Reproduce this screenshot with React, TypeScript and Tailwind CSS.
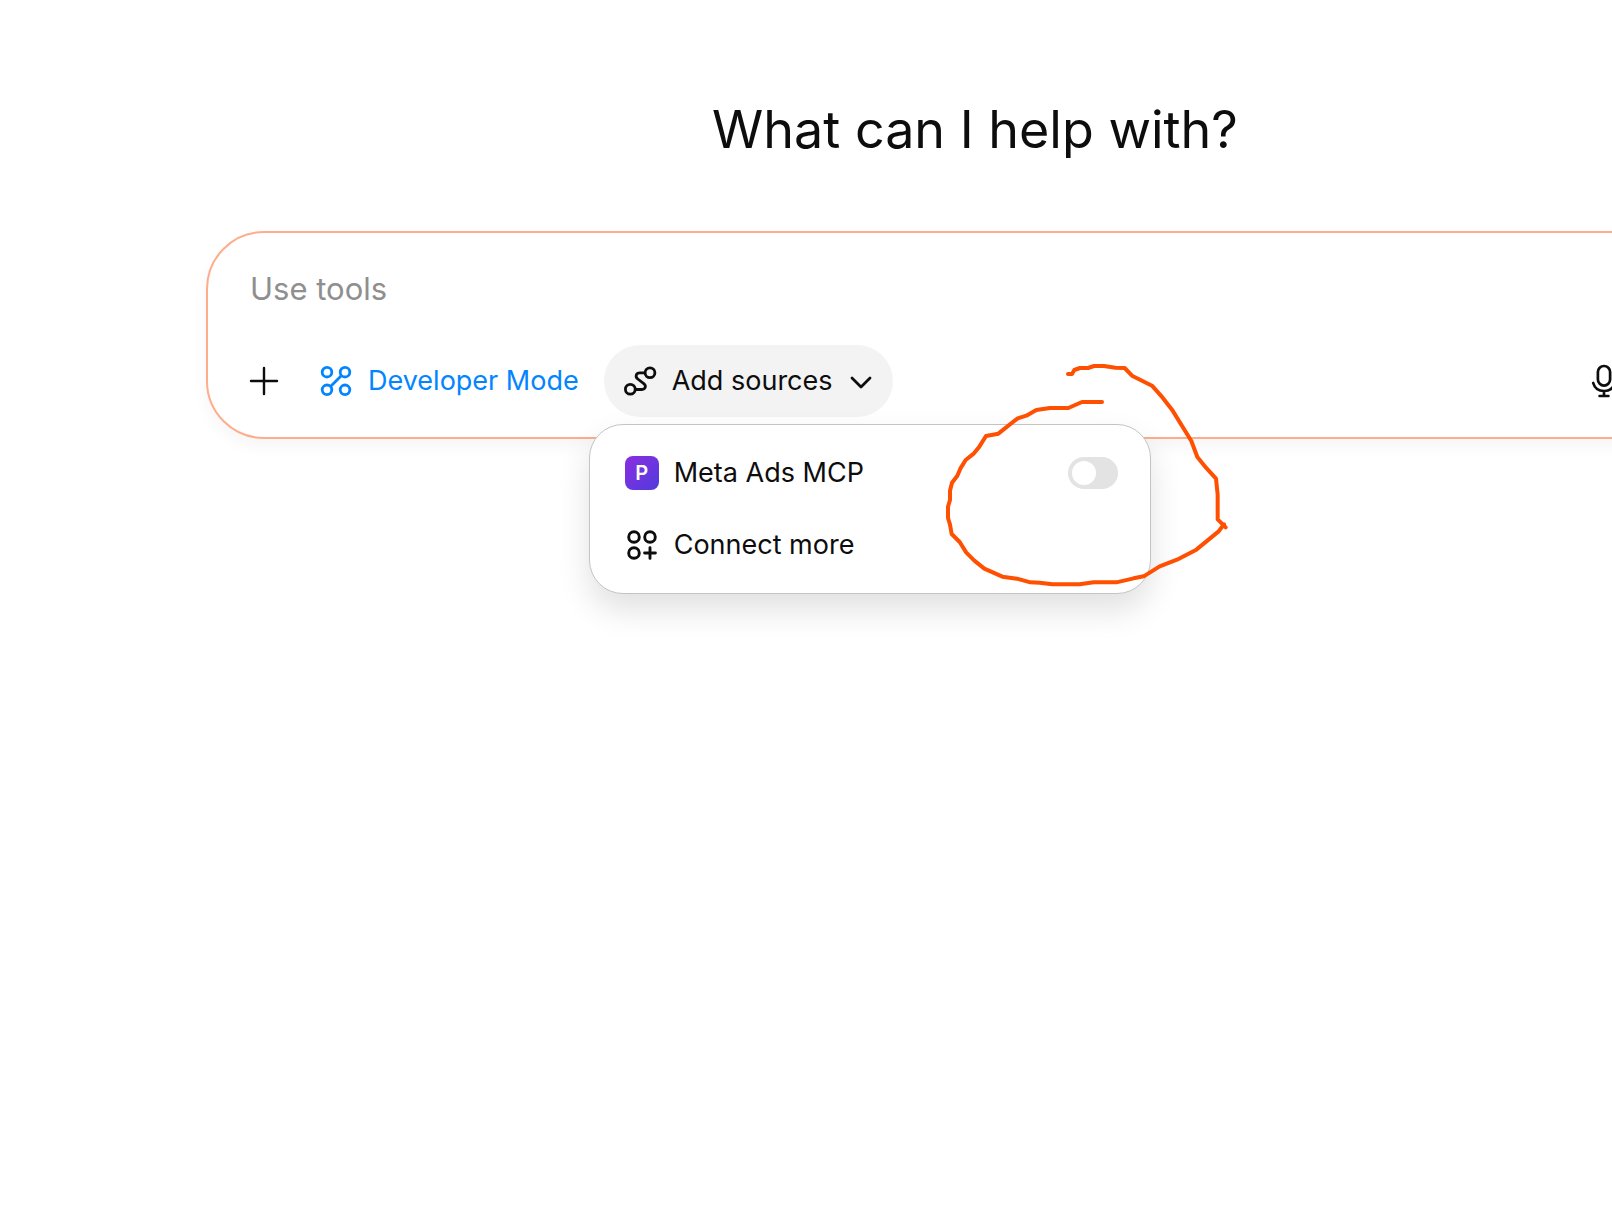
import { useState } from 'react'

function PlusIcon() {
  return (
    <svg viewBox="0 0 36 36" className="size-9" fill="none" stroke="currentColor" strokeWidth="2.4" strokeLinecap="round" aria-hidden="true">
      <path d="M18 5v26M5 18h26" />
    </svg>
  )
}

function DeveloperIcon() {
  return (
    <svg viewBox="0 0 36 36" className="size-9 shrink-0" fill="none" stroke="currentColor" strokeWidth="2.8" aria-hidden="true">
      <circle cx="9" cy="9.2" r="4.8" />
      <circle cx="27" cy="9.2" r="4.8" />
      <circle cx="9" cy="26.8" r="4.8" />
      <circle cx="27" cy="26.8" r="4.8" />
      <path d="M12.5 23.4 23.5 12.6" />
    </svg>
  )
}

function SourcesIcon() {
  return (
    <svg viewBox="0 0 36 36" className="size-9 shrink-0" fill="none" stroke="currentColor" strokeWidth="2.8" aria-hidden="true">
      <circle cx="8.3" cy="26.3" r="4.9" />
      <circle cx="28" cy="9.7" r="4.9" />
      <path d="M23 9.8h-5c-4.2 0-5 4-2.2 6.2l6 4.7c2.8 2.2 1.6 5.8-1.8 5.8h-6.6" />
    </svg>
  )
}

function ChevronIcon() {
  return (
    <svg viewBox="0 0 24 24" className="ml-0.5 size-6 shrink-0" fill="none" stroke="currentColor" strokeWidth="2.8" strokeLinecap="round" strokeLinejoin="round" aria-hidden="true">
      <path d="m3 9 9 9 9-9" />
    </svg>
  )
}

function MicIcon() {
  return (
    <svg viewBox="0 0 36 36" className="size-9" fill="none" stroke="currentColor" strokeWidth="2.7" strokeLinecap="round" aria-hidden="true">
      <rect x="11.9" y="3" width="12.2" height="19.6" rx="6.1" />
      <path d="M7.2 20C8.6 25 12.7 28 18 28s9.4-3 10.8-8M18 28v5M13.6 33h8.8" />
    </svg>
  )
}

function ConnectIcon() {
  return (
    <svg viewBox="0 0 34 34" className="size-[34px] shrink-0" fill="none" stroke="currentColor" strokeWidth="2.9" aria-hidden="true">
      <circle cx="9" cy="9" r="5.3" />
      <circle cx="25" cy="9" r="5.3" />
      <circle cx="9" cy="25" r="5.3" />
      <path d="M25 19.6v10.8M19.6 25h10.8" strokeLinecap="round" />
    </svg>
  )
}

// Freehand marker drawn around the source toggle
function Scribble() {
  return (
    <svg
      viewBox="0 0 960 780"
      className="pointer-events-none absolute left-[930px] top-[350px] h-[260px] w-[320px]"
      fill="none"
      stroke="#ff4f00"
      strokeWidth="12"
      strokeLinecap="round"
      strokeLinejoin="round"
      aria-hidden="true"
    >
      <path d="M414 72h12l7-12 17-6h24l18-6h30l34 5 28 1 22 23 60 30 32 36 28 36 58 94 18 48 26 32 30 33 5 48v74l24 24M516 156h-60l-41 18h-55l-41 6-30 17-26 8-58 46-37 7-20 32-16 20-25 20-16 26-9 21-16 21-6 24v28l-6 20v34l6 20 5 28 24 24 20 32 24 24 30 24 54 24 44 6 40 11 28 1 38 5h82l42-6h68l52-12 30-6 48-30 52-20 58-30 66-54 17-22" />
    </svg>
  )
}

export default function App() {
  const [prompt, setPrompt] = useState('')
  const [menuOpen, setMenuOpen] = useState(true)
  const [metaAds, setMetaAds] = useState(false)

  return (
    <div className="relative min-h-screen overflow-hidden bg-white pl-[206px] font-['Inter',sans-serif] text-[#0d0d0d]">
      <main className="-mr-[132px] pt-24">
        <h1 className="text-center text-[52px] leading-[67px]">What can I help with?</h1>

        {/* Composer */}
        <form
          className="mt-17 rounded-[58px] border-2 border-[#fdad8c] bg-white p-5 shadow-[0_8px_16px_rgba(0,0,0,0.04)]"
          onSubmit={(e) => e.preventDefault()}
        >
          <input
            type="text"
            aria-label="Prompt"
            placeholder="Use tools"
            value={prompt}
            onChange={(e) => setPrompt(e.target.value)}
            className="mb-[34px] mt-3.5 block h-11 w-full px-[22px] text-[31px] outline-none placeholder:text-[#8f8f8f]"
          />

          <div className="flex h-[72px] items-center text-[27px]">
            <button type="button" aria-label="Add" className="flex size-[72px] items-center justify-center rounded-full">
              <PlusIcon />
            </button>

            <button type="button" className="flex h-[72px] items-center gap-3.5 rounded-full px-[18px] text-[#0285ff]">
              <DeveloperIcon />
              Developer Mode
            </button>

            <div className="relative ml-[7px]">
              <button
                type="button"
                aria-expanded={menuOpen}
                onClick={() => setMenuOpen((prev) => !prev)}
                className="flex h-[72px] items-center gap-3.5 rounded-full bg-[#f3f3f3] pl-[18px] pr-5"
              >
                <SourcesIcon />
                Add sources
                <ChevronIcon />
              </button>

              {/* Sources menu */}
              {menuOpen && (
                <div className="absolute -left-[15px] top-full mt-[7px] w-[562px] rounded-[34px] border border-[#c4c4c4] bg-white py-3 shadow-[0_16px_32px_rgba(0,0,0,0.12)]">
                  <label className="flex h-[72px] cursor-pointer items-center gap-[15px] pl-[35px] pr-8">
                    <span
                      aria-hidden="true"
                      className="flex size-[34px] items-center justify-center rounded-lg bg-linear-to-br from-[#8a2be2] to-[#4f39dc] text-xl font-semibold text-white"
                    >
                      P
                    </span>
                    Meta Ads MCP
                    <input
                      type="checkbox"
                      role="switch"
                      checked={metaAds}
                      onChange={(e) => setMetaAds(e.target.checked)}
                      className="ml-auto h-8 w-[50px] appearance-none rounded-full bg-[#e3e3e3] p-1 transition before:block before:size-6 before:rounded-full before:bg-white before:transition before:content-[''] checked:bg-[#0285ff] checked:before:translate-x-[18px]"
                    />
                  </label>
                  <button type="button" className="flex h-[72px] w-full items-center gap-[15px] pl-[35px] pr-8">
                    <ConnectIcon />
                    Connect more
                  </button>
                </div>
              )}
            </div>

            <button type="button" aria-label="Dictate" className="ml-auto mr-[82px] flex size-[72px] items-center justify-center rounded-full">
              <MicIcon />
            </button>
          </div>
        </form>
      </main>

      <Scribble />
    </div>
  )
}
